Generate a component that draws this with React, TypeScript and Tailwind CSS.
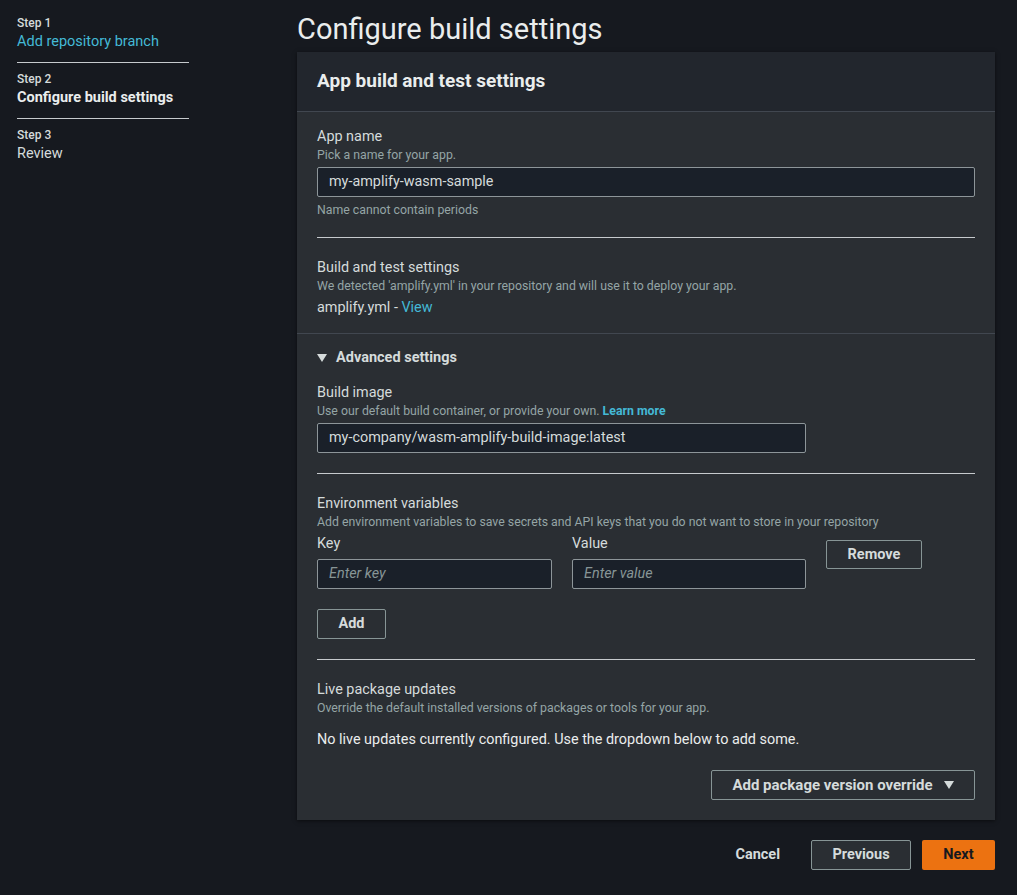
import { ReactNode } from 'react'

const font = { fontFamily: 'Roboto, "Liberation Sans", sans-serif' }

function Triangle({ className = '' }: { className?: string }) {
  return (
    <svg viewBox="0 0 10 8" className={className} fill="currentColor">
      <path d="M0 0H10L5 8Z" />
    </svg>
  )
}

function Field({ label, hint, children }: { label: string; hint?: ReactNode; children?: ReactNode }) {
  return (
    <div>
      <div className="text-[14.4px] leading-[20px] text-[#d5dbdb]">{label}</div>
      {hint && <div className="text-[12.3px] leading-[16px] text-[#95a5a6]">{hint}</div>}
      {children}
    </div>
  )
}

function TextInput({ value, placeholder, className = '' }: { value?: string; placeholder?: string; className?: string }) {
  return (
    <div
      className={`h-[30px] flex items-center px-[11px] bg-[#1a2029] border border-[#8d9599] rounded-[2px] text-[14.4px] ${className}`}
    >
      {value ? (
        <span className="text-[#d5dbdb]">{value}</span>
      ) : (
        <span className="italic text-[#879596]">{placeholder}</span>
      )}
    </div>
  )
}

function Button({ children, className = '' }: { children: ReactNode; className?: string }) {
  return (
    <button
      className={`h-[29px] flex items-center justify-center border border-[#879596] rounded-[2px] text-[14.5px] font-bold text-[#d5dbdb] ${className}`}
    >
      {children}
    </button>
  )
}

function Divider({ className = '' }: { className?: string }) {
  return <div className={`h-px bg-[#c6cacd] ${className}`} />
}

const steps = [
  { step: 'Step 1', title: 'Add repository branch', state: 'done' },
  { step: 'Step 2', title: 'Configure build settings', state: 'active' },
  { step: 'Step 3', title: 'Review', state: 'todo' },
]

export default function App() {
  return (
    <div className="min-h-[895px] w-full bg-[#16191f] flex" style={font}>
      {/* 左侧步骤导航 */}
      <aside className="w-[297px] shrink-0 pl-[17px] pt-[7px]">
        <div className="w-[172px]">
          {steps.map((s, i) => (
            <div
              key={s.step}
              className={`pt-[8px] ${i < steps.length - 1 ? 'pb-[10px] border-b border-[#c6cacd]' : ''}`}
            >
              <div className="text-[12px] leading-[16px] font-medium text-[#d5dbdb]">{s.step}</div>
              <div
                className={`mt-[1px] text-[14.5px] leading-[20px] ${
                  s.state === 'done'
                    ? 'text-[#44b9d6]'
                    : s.state === 'active'
                      ? 'font-bold text-[#eaeded]'
                      : 'text-[#d5dbdb]'
                }`}
              >
                {s.title}
              </div>
            </div>
          ))}
        </div>
      </aside>

      {/* 主内容 */}
      <main className="w-[698px] pt-[11px]">
        <h1 className="text-[29px] leading-[36px] text-[#eaeded] mb-[5px]">Configure build settings</h1>

        <section className="bg-[#2a2e33] shadow-[0_1px_4px_rgba(0,0,0,0.55)]">
          <div className="h-[60px] flex items-center px-5 bg-[#22262d] border-b border-[#414750]">
            <h2 className="text-[19px] font-bold text-[#eaeded]">App build and test settings</h2>
          </div>

          {/* 基本设置 */}
          <div className="px-5 pt-[15px] pb-[15px] border-b border-[#414750]">
            <Field label="App name" hint="Pick a name for your app.">
              <TextInput value="my-amplify-wasm-sample" className="mt-[4px]" />
              <div className="mt-[5px] text-[12.3px] leading-[16px] text-[#95a5a6]">Name cannot contain periods</div>
            </Field>
            <Divider className="mt-[19px]" />
            <div className="mt-[20px]">
              <Field label="Build and test settings" hint="We detected 'amplify.yml' in your repository and will use it to deploy your app." />
              <div className="mt-[4px] text-[14.4px] leading-[20px] text-[#d5dbdb]">
                amplify.yml - <span className="text-[#44b9d6]">View</span>
              </div>
            </div>
          </div>

          {/* 高级设置 */}
          <div className="px-5 pt-[14px] pb-[20px]">
            <div className="flex items-center gap-[9px] text-[14.5px] leading-[20px] font-bold text-[#d5dbdb]">
              <Triangle className="w-[10px] h-[8px]" />
              Advanced settings
            </div>

            <div className="mt-[15px]">
              <Field
                label="Build image"
                hint={
                  <>
                    Use our default build container, or provide your own.{' '}
                    <span className="font-bold text-[#44b9d6]">Learn more</span>
                  </>
                }
              >
                <TextInput value="my-company/wasm-amplify-build-image:latest" className="mt-[4px] w-[489px]" />
              </Field>
            </div>

            <Divider className="mt-[20px]" />

            <div className="mt-[20px]">
              <Field
                label="Environment variables"
                hint="Add environment variables to save secrets and API keys that you do not want to store in your repository"
              />
              <div className="mt-[4px] grid grid-cols-[235px_234px_auto] gap-x-[20px]">
                <div>
                  <div className="text-[14.4px] leading-[20px] text-[#d5dbdb]">Key</div>
                  <TextInput placeholder="Enter key" className="mt-[5px]" />
                </div>
                <div>
                  <div className="text-[14.4px] leading-[20px] text-[#d5dbdb]">Value</div>
                  <TextInput placeholder="Enter value" className="mt-[5px]" />
                </div>
                <div className="pt-[6px]">
                  <Button className="w-[96px]">Remove</Button>
                </div>
              </div>
              <Button className="mt-[20px] w-[69px] h-[30px]">Add</Button>
            </div>

            <Divider className="mt-[20px]" />

            <div className="mt-[20px]">
              <Field label="Live package updates" hint="Override the default installed versions of packages or tools for your app." />
              <div className="mt-[14px] text-[14.4px] leading-[20px] text-[#eaeded]">
                No live updates currently configured. Use the dropdown below to add some.
              </div>
              <div className="mt-[20px] flex justify-end">
                <Button className="w-[264px] h-[30px] gap-[11px] text-[15px]">
                  Add package version override
                  <Triangle className="w-[10px] h-[8px]" />
                </Button>
              </div>
            </div>
          </div>
        </section>

        {/* 底部操作 */}
        <div className="mt-[20px] flex justify-end gap-[11px]">
          <button className="h-[30px] px-5 text-[14.5px] font-bold text-[#d5dbdb]">Cancel</button>
          <Button className="w-[100px] h-[30px] bg-[#2a2e33]">Previous</Button>
          <button className="h-[30px] w-[73px] rounded-[2px] bg-[#ec7211] text-[14.5px] font-bold text-[#16191f]">
            Next
          </button>
        </div>
      </main>
    </div>
  )
}
